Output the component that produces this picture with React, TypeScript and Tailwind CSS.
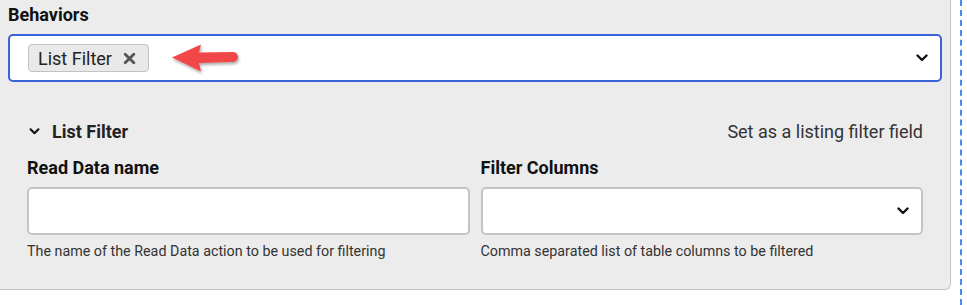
import React from 'react';

function Chevron({ className = '' }: { className?: string }) {
  return (
    <svg className={className} viewBox="0 0 12 8" fill="none" stroke="currentColor">
      <path d="M1.5 1.5L6 6l4.5-4.5" strokeWidth={2.4} strokeLinecap="round" strokeLinejoin="round" />
    </svg>
  );
}

function CloseX() {
  return (
    <svg className="ml-[11px] h-[13px] w-[13px] text-[#555]" viewBox="0 0 12 12" fill="none" stroke="currentColor">
      <path d="M2 2l8 8M10 2l-8 8" strokeWidth={2.6} strokeLinecap="round" />
    </svg>
  );
}

function RedArrow() {
  return (
    <svg width="72" height="36" viewBox="0 0 72 36" className="ml-[21px] mt-[3px]">
      <defs>
        <filter id="sh" x="-20%" y="-30%" width="140%" height="160%">
          <feDropShadow dx="1" dy="2" stdDeviation="1.5" floodColor="#000" floodOpacity="0.35" />
        </filter>
      </defs>
      <g filter="url(#sh)">
        <path d="M2 15.5L31 2.5L29 10.5L63 10a5 5 0 0 1 0 10L29 21L31 29.5Z" fill="#f2474a" />
      </g>
    </svg>
  );
}

export default function App() {
  return (
    <div className="flex h-[305px] w-[967px] bg-white" style={{ fontFamily: 'Roboto, "Liberation Sans", sans-serif' }}>
      <div className="h-[290px] w-[951px] rounded-br-md border-r border-b border-[#c6c6c6] bg-[#ececec] pl-2 pr-2">
        <div className="pt-[3px] text-[18px] leading-6 font-bold text-[#111]">Behaviors</div>
        <div className="mt-[7px] flex h-12 items-center rounded-[5px] border-2 border-[#3a63d8] bg-white pl-[18px] pr-[12px]">
          <div className="flex h-[28px] items-center rounded-[4px] border border-[#c2c2c2] bg-[#e9e9e9] pl-[9px] pr-[12px] text-[18px] text-[#222]">
            List Filter
            <CloseX />
          </div>
          <RedArrow />
          <div className="flex-1" />
          <Chevron className="h-[8px] w-[12px] text-[#111]" />
        </div>

        <div className="pt-[37px] pl-[19px] pr-[19px]">
          <div className="flex h-6 items-center justify-between">
            <div className="flex items-center">
              <Chevron className="ml-[2px] h-[7px] w-[11px] text-[#111]" />
              <span className="ml-[12px] text-[18px] font-bold text-[#222]">List Filter</span>
            </div>
            <span className="text-[18px] text-[#333]">Set as a listing filter field</span>
          </div>

          <div className="mt-[13px] grid grid-cols-2 gap-[11px]">
            <div>
              <div className="text-[18px] leading-6 font-bold text-[#111]">Read Data name</div>
              <div className="mt-[7px] h-12 rounded-[5px] border-2 border-[#c4c4c4] bg-white" />
              <div className="mt-[7px] text-[14.3px] leading-[18px] text-[#333]">The name of the Read Data action to be used for filtering</div>
            </div>
            <div>
              <div className="text-[18px] leading-6 font-bold text-[#111]">Filter Columns</div>
              <div className="mt-[7px] flex h-12 items-center justify-end rounded-[5px] border-2 border-[#c4c4c4] bg-white pr-[12px]">
                <Chevron className="h-[8px] w-[12px] text-[#111]" />
              </div>
              <div className="mt-[7px] text-[14.3px] leading-[18px] text-[#333]">Comma separated list of table columns to be filtered</div>
            </div>
          </div>
        </div>
      </div>
      <div className="ml-[9px] h-full w-[2px] border-l-2 border-dashed border-[#4a8af0]" />
    </div>
  );
}
